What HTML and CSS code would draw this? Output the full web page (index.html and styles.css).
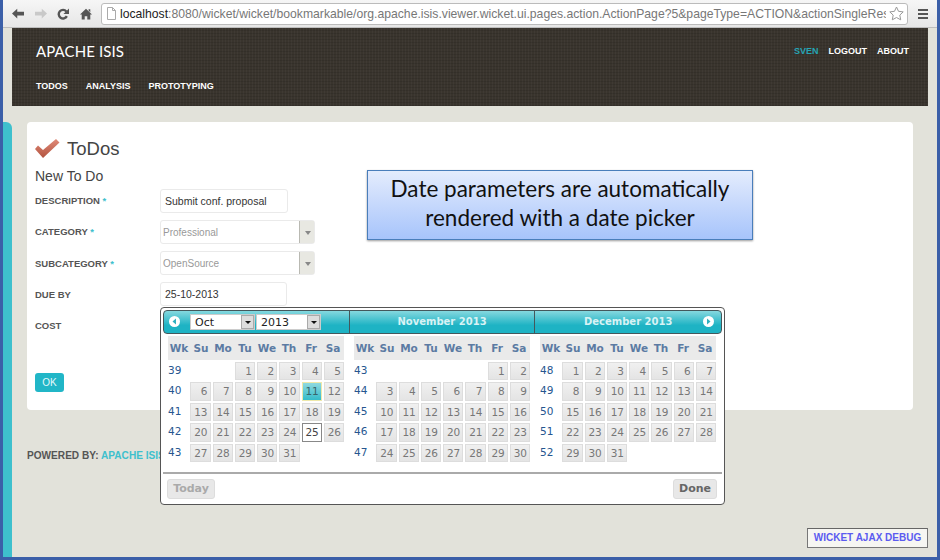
FILE: index.html
```html
<!DOCTYPE html>
<html lang="en">
<head>
    <meta charset="UTF-8">
    <title>ToDos</title>
    <link rel="stylesheet" href="styles.css">
</head>
<body>
    <div class="window">
        <div class="toolbar">
            <svg class="tool" width="12" height="11" viewBox="0 0 16 14"><path d="M0 7l7-6.500v4h9v5h-9v4z" fill="#555"/></svg>
            <svg class="tool" width="12" height="11" viewBox="0 0 16 14"><path d="M16 7l-7-6.500v4h-9v5h9v4z" fill="#c9c9c9"/></svg>
            <svg class="tool" width="12" height="12" viewBox="0 0 14 14"><path d="M11.500 9.500a5 5 0 1 1-.6-5.500" fill="none" stroke="#555" stroke-width="2.800"/><path d="M14 .5v6.500h-6.500z" fill="#555"/></svg>
            <svg class="tool" width="12" height="12" viewBox="0 0 14 14"><path d="M7 1l7 6.500h-2v6h-3.500v-4h-3v4h-3.500v-6h-2zM10 1.500h2v3.500l-2-2z" fill="#555"/></svg>
            <div class="urlbar">
                <svg width="11" height="13" viewBox="0 0 11 13"><path d="M1.500.5h5l3 3v9h-8zM6.500.5v3h3" fill="#fff" stroke="#aaa"/></svg>
                <div class="url"><b>localhost</b>:8080/wicket/wicket/bookmarkable/org.apache.isis.viewer.wicket.ui.pages.action.ActionPage?5&amp;pageType=ACTION&amp;actionSingleResult</div>
                <svg width="15" height="15" viewBox="0 0 15 15"><path d="M7.500 1l2 4.300 4.700.6-3.400 3.200.9 4.700-4.200-2.300-4.200 2.300.9-4.700-3.400-3.200 4.700-.6z" fill="#fff" stroke="#999"/></svg>
            </div>
            <div class="menu-icon"><i></i><i></i><i></i></div>
        </div>

        <div class="page">
            <div class="header">
                <div class="header-top">
                    <div class="brand">APACHE ISIS</div>
                    <div class="usernav">
                        <span class="user">SVEN</span>
                        <span>LOGOUT</span>
                        <span>ABOUT</span>
                    </div>
                </div>
                <div class="mainnav">
                    <span>TODOS</span>
                    <span>ANALYSIS</span>
                    <span>PROTOTYPING</span>
                </div>
            </div>

            <div class="content">
                <div class="sidebar"></div>
                <div class="main">
                    <div class="card">
                        <div class="title">
                            <svg width="25" height="20" viewBox="0 0 25 20">
                                <defs><linearGradient id="tick" x1="0" y1="0" x2="0" y2="1"><stop offset="0" stop-color="#e08a78"/><stop offset="1" stop-color="#b2533f"/></linearGradient></defs>
                                <path d="M0 10l3-3.500 5 4.500 13-11 3.500 3.500-16.500 15.500z" fill="url(#tick)"/>
                            </svg>
                            <h1>ToDos</h1>
                        </div>
                        <h2>New To Do</h2>
                        <div class="row">
                            <label>DESCRIPTION <em>*</em></label>
                            <div class="input">Submit conf. proposal</div>
                        </div>
                        <div class="row">
                            <label>CATEGORY <em>*</em></label>
                            <div class="select"><span>Professional</span><b></b></div>
                        </div>
                        <div class="row">
                            <label>SUBCATEGORY <em>*</em></label>
                            <div class="select"><span>OpenSource</span><b></b></div>
                        </div>
                        <div class="row">
                            <label>DUE BY</label>
                            <div class="input date">25-10-2013</div>
                        </div>
                        <div class="row">
                            <label>COST</label>
                        </div>
                        <button class="ok">OK</button>
                    </div>
                    <div class="powered">POWERED BY: <span>APACHE ISIS</span></div>
                </div>
            </div>

            <div class="callout">Date parameters are automatically<br>rendered with a date picker</div>

            <div class="picker">
                <div class="picker-head">
                    <div class="picker-title first">
                        <svg class="nav" width="11" height="11" viewBox="0 0 11 11"><circle cx="5.500" cy="5.500" r="5.500" fill="#fff"/><path d="M7 2.500v6l-3.500-3z" fill="#2fb0bf"/></svg>
                        <div class="drop month">Oct<b></b></div>
                        <div class="drop year">2013<b></b></div>
                    </div>
                    <div class="picker-title">November 2013</div>
                    <div class="picker-title last">December 2013
                        <svg class="nav" width="11" height="11" viewBox="0 0 11 11"><circle cx="5.500" cy="5.500" r="5.500" fill="#fff"/><path d="M4 2.500v6l3.500-3z" fill="#2fb0bf"/></svg>
                    </div>
                </div>
                <div class="months">
                    <div class="month-col">
                        <div class="days"><span>Wk</span><span>Su</span><span>Mo</span><span>Tu</span><span>We</span><span>Th</span><span>Fr</span><span>Sa</span></div>
                        <div class="weeks">
                            <i>39</i><s></s><s></s><a>1</a><a>2</a><a>3</a><a>4</a><a>5</a>
                            <i>40</i><a>6</a><a>7</a><a>8</a><a>9</a><a>10</a><a class="today">11</a><a>12</a>
                            <i>41</i><a>13</a><a>14</a><a>15</a><a>16</a><a>17</a><a>18</a><a>19</a>
                            <i>42</i><a>20</a><a>21</a><a>22</a><a>23</a><a>24</a><a class="picked">25</a><a>26</a>
                            <i>43</i><a>27</a><a>28</a><a>29</a><a>30</a><a>31</a><s></s><s></s>
                        </div>
                    </div>
                    <div class="month-col">
                        <div class="days"><span>Wk</span><span>Su</span><span>Mo</span><span>Tu</span><span>We</span><span>Th</span><span>Fr</span><span>Sa</span></div>
                        <div class="weeks">
                            <i>43</i><s></s><s></s><s></s><s></s><s></s><a>1</a><a>2</a>
                            <i>44</i><a>3</a><a>4</a><a>5</a><a>6</a><a>7</a><a>8</a><a>9</a>
                            <i>45</i><a>10</a><a>11</a><a>12</a><a>13</a><a>14</a><a>15</a><a>16</a>
                            <i>46</i><a>17</a><a>18</a><a>19</a><a>20</a><a>21</a><a>22</a><a>23</a>
                            <i>47</i><a>24</a><a>25</a><a>26</a><a>27</a><a>28</a><a>29</a><a>30</a>
                        </div>
                    </div>
                    <div class="month-col">
                        <div class="days"><span>Wk</span><span>Su</span><span>Mo</span><span>Tu</span><span>We</span><span>Th</span><span>Fr</span><span>Sa</span></div>
                        <div class="weeks">
                            <i>48</i><a>1</a><a>2</a><a>3</a><a>4</a><a>5</a><a>6</a><a>7</a>
                            <i>49</i><a>8</a><a>9</a><a>10</a><a>11</a><a>12</a><a>13</a><a>14</a>
                            <i>50</i><a>15</a><a>16</a><a>17</a><a>18</a><a>19</a><a>20</a><a>21</a>
                            <i>51</i><a>22</a><a>23</a><a>24</a><a>25</a><a>26</a><a>27</a><a>28</a>
                            <i>52</i><a>29</a><a>30</a><a>31</a><s></s><s></s><s></s><s></s>
                        </div>
                    </div>
                </div>
                <div class="picker-foot">
                    <button class="today-btn">Today</button>
                    <button class="done-btn">Done</button>
                </div>
            </div>

            <div class="debug">WICKET AJAX DEBUG</div>
        </div>
    </div>
</body>
</html>
```

FILE: styles.css
```css
* {
    box-sizing: border-box;
}
body {
    margin: 0;
    font-family: "Liberation Sans", Arial, sans-serif;
    background: #fff;
}
.window {
    width: 940px;
    height: 560px;
    display: flex;
    flex-direction: column;
    overflow: hidden;
    border-left: 3px solid #3b5fa8;
    border-right: 3px solid #3b5fa8;
    border-bottom: 3px solid #3b5fa8;
}

/* browser toolbar */
.toolbar {
    height: 28px;
    flex: none;
    display: flex;
    align-items: center;
    padding-left: 9px;
    background: linear-gradient(#f6f6f6, #e6e6e6);
    border-bottom: 1px solid #bdbdbd;
}
.tool {
    margin-right: 10.500px;
}
.urlbar {
    width: 807px;
    height: 22px;
    margin-left: -1px;
    display: flex;
    align-items: center;
    gap: 3px;
    padding: 0 3px 0 4px;
    background: #fff;
    border: 1px solid #bbb;
    border-radius: 3px;
}
.url {
    flex: 1;
    overflow: hidden;
    white-space: nowrap;
    font-size: 12.200px;
    color: #777;
}
.url b {
    font-weight: normal;
    color: #222;
}
.menu-icon {
    margin-left: 10px;
    width: 10px;
    display: flex;
    flex-direction: column;
    gap: 2px;
}
.menu-icon i {
    height: 2px;
    background: #555;
}

/* page */
.page {
    flex: 1;
    min-height: 0;
    position: relative;
    background: #e2e2da;
}
.header {
    height: 78px;
    margin: 0 9px;
    padding: 14px 19px 0 24px;
    color: #fff;
    background-color: #39342d;
    background-image:
        repeating-linear-gradient(0deg, rgba(0, 0, 0, .1) 0 1px, transparent 1px 3px),
        repeating-linear-gradient(90deg, rgba(255, 255, 255, .03) 0 1px, transparent 1px 3px);
}
.header-top {
    display: flex;
    justify-content: space-between;
    align-items: center;
}
.brand {
    font-family: Lato, sans-serif;
    font-size: 15px;
    letter-spacing: .1px;
    line-height: 18px;
}
.usernav {
    display: flex;
    gap: 10px;
    margin-top: -1px;
    font-size: 9px;
    font-weight: bold;
}
.user {
    color: #26a5b4;
}
.mainnav {
    display: flex;
    gap: 18px;
    margin-top: 21px;
    font-size: 9px;
    font-weight: bold;
}
.content {
    display: flex;
    align-items: flex-start;
    margin-top: 16px;
}
.sidebar {
    width: 9px;
    height: 435px;
    background: #3ec0cd;
    border-radius: 0 6px 0 0;
}
.main {
    width: 886px;
    margin-left: 15px;
}
.card {
    height: 288px;
    padding: 14px 8px;
    background: #fff;
    border-radius: 4px;
}
.title {
    display: flex;
    align-items: center;
    gap: 7px;
    height: 26px;
}
.title h1 {
    margin: 0;
    font-size: 18.500px;
    font-weight: normal;
    color: #444;
}
.card h2 {
    margin: 5px 0 0;
    font-size: 14px;
    font-weight: normal;
    line-height: 18px;
    color: #444;
}
.row {
    display: flex;
    align-items: center;
    height: 31.250px;
}
.row label {
    width: 125px;
    font-size: 9.500px;
    font-weight: bold;
    color: #555;
}
.row em {
    font-style: normal;
    color: #3ec0cd;
}
.input {
    width: 128px;
    height: 24px;
    padding-left: 4px;
    font-size: 10.500px;
    line-height: 23px;
    color: #333;
    border: 1px solid #eaeaea;
    border-radius: 3px;
}
.input.date {
    width: 127px;
}
.select {
    width: 155px;
    height: 24px;
    display: flex;
    justify-content: space-between;
    font-size: 10px;
    line-height: 23px;
    color: #999;
    border: 1px solid #eaeaea;
    border-radius: 3px;
}
.select span {
    padding-left: 2px;
}
.select b {
    width: 15px;
    position: relative;
    background: #e8e8e2;
    border-left: 1px solid #b9b9b2;
}
.select b::after {
    content: "";
    position: absolute;
    left: 5px;
    top: 10px;
    border: 3px solid transparent;
    border-top: 4px solid #888;
    border-bottom: 0;
}
.ok {
    display: block;
    width: 29px;
    height: 19px;
    margin-top: 32px;
    padding: 0;
    font: 10px "Liberation Sans", Arial, sans-serif;
    color: #e6f8fa;
    background: #21b6c7;
    border: none;
    border-radius: 3px;
}
.powered {
    margin-top: 40px;
    font-size: 10.100px;
    font-weight: bold;
    color: #555;
}
.powered span {
    color: #3ec0cd;
}

/* overlays */
.callout {
    position: absolute;
    left: 364px;
    top: 142px;
    width: 386px;
    height: 70px;
    padding-top: 3px;
    text-align: center;
    font-family: Lato, sans-serif;
    font-size: 22.500px;
    line-height: 29px;
    color: #111;
    background: linear-gradient(#e4ecfd, #a7c4fb);
    border: 1px solid #4a7ebb;
    box-shadow: 0 1px 2px rgba(0, 0, 0, .4);
}
.picker {
    position: absolute;
    left: 157px;
    top: 279px;
    width: 565px;
    height: 198px;
    padding: 2px;
    font-family: "DejaVu Sans", sans-serif;
    background: #fff;
    border: 1px solid #555;
    border-radius: 4px;
}
.picker-head {
    display: flex;
    height: 24px;
    color: #d8f3f5;
    font-size: 10px;
    font-weight: bold;
    background: linear-gradient(#85d8df, #1eb3c4 65%);
    border: 1px solid #44585c;
    border-radius: 4px;
}
.picker-title {
    width: 186px;
    position: relative;
    text-align: center;
    line-height: 22px;
    border-right: 1px solid #44585c;
}
.picker-title.first {
    display: flex;
    align-items: center;
    padding-left: 26px;
    gap: 1px;
}
.picker-title.last {
    border-right: none;
}
.nav {
    position: absolute;
    top: 5px;
    left: 5px;
}
.last .nav {
    left: auto;
    right: 7px;
}
.drop {
    height: 16px;
    position: relative;
    padding-left: 4px;
    font-size: 11px;
    font-weight: normal;
    line-height: 15px;
    text-align: left;
    color: #222;
    background: #fff;
    border: 1px solid #ccc;
}
.drop.month {
    width: 65px;
}
.drop.year {
    width: 65px;
}
.drop b {
    position: absolute;
    right: 0;
    top: 0;
    width: 13px;
    height: 14px;
    background: #ddd;
    border: 1px solid #aaa;
}
.drop b::after {
    content: "";
    position: absolute;
    left: 3px;
    top: 5px;
    border: 3px solid transparent;
    border-top: 3px solid #111;
    border-bottom: 0;
}
.months {
    display: flex;
    gap: 10px;
    padding: 2px 0 0 5px;
}
.month-col {
    width: 176px;
}
.days {
    display: grid;
    grid-template-columns: repeat(8, 1fr);
    height: 24px;
    background: #eaeaea;
    font-size: 10.500px;
    font-weight: bold;
    line-height: 24px;
    text-align: center;
    color: #5c7ba3;
}
.weeks {
    display: grid;
    grid-template-columns: repeat(8, 20.250px);
    grid-auto-rows: 18.400px;
    gap: 2px;
    margin-top: 2px;
    font-size: 10.500px;
    line-height: 17px;
}
.weeks i {
    font-style: normal;
    color: #26568f;
}
.weeks a {
    padding-right: 2px;
    text-align: right;
    color: #777;
    background: linear-gradient(#f0f0f0, #e4e4e4);
    border: 1px solid #ddd;
}
.weeks a.today {
    color: #39656b;
    background: linear-gradient(#8fd9df, #35bcca);
    border-color: #eee8aa;
}
.weeks a.picked {
    color: #444;
    background: #fff;
    border-color: #888;
}
.picker-foot {
    display: flex;
    justify-content: space-between;
    margin-top: 10px;
    padding: 5px 5px 0 4px;
    border-top: 2px solid #aaa;
}
.picker-foot button {
    height: 20px;
    padding: 0;
    font: bold 11px "DejaVu Sans", sans-serif;
    background: #e8e8e8;
    border: 1px solid #ddd;
    border-radius: 3px;
}
.today-btn {
    width: 48px;
    color: #aaa;
}
.done-btn {
    width: 44px;
    color: #666;
}
.debug {
    position: absolute;
    right: 9px;
    bottom: 9px;
    width: 121px;
    height: 20px;
    text-align: center;
    font-size: 10px;
    font-weight: bold;
    line-height: 18px;
    color: #5b5bf0;
    background: #f6f6f2;
    border: 1px solid #777;
    border-top-color: #666;
}
```
